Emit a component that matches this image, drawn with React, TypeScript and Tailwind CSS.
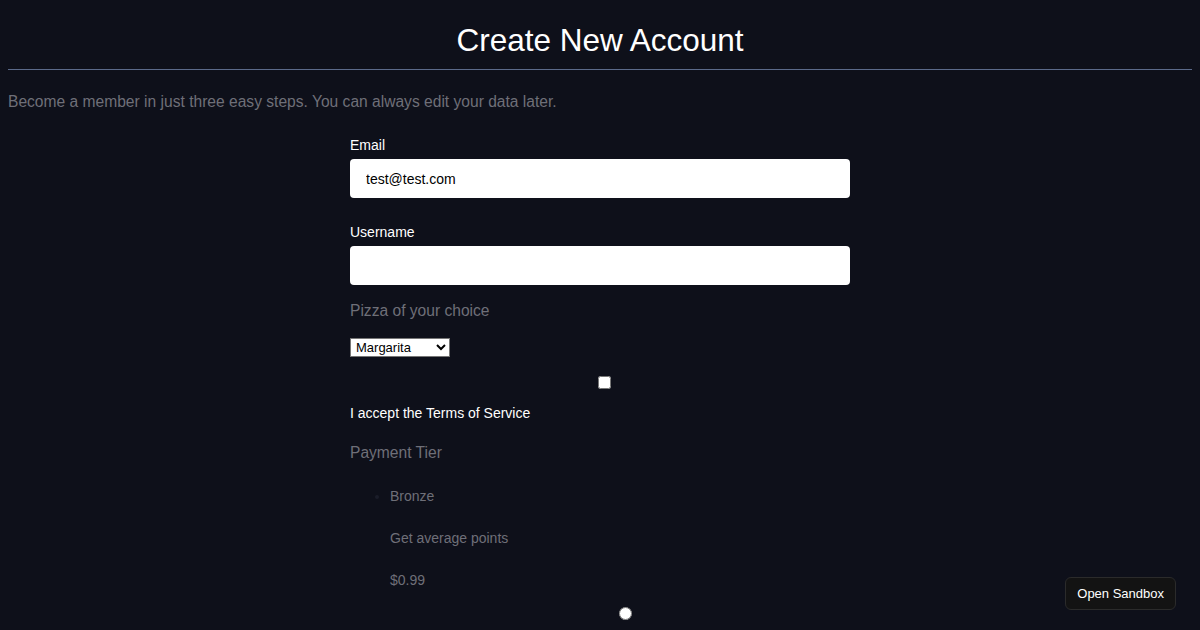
export default function App() {
  return (
    <div className="min-h-screen bg-[#0e101a] font-['Liberation_Sans',Arial,sans-serif] text-white">
      {/* Header */}
      <h1 className="pt-[20px] text-center text-[31.5px] leading-[40px] font-normal">Create New Account</h1>
      <hr className="mx-2 mt-[9px] border-0 border-t border-[#5b6a8a]" />
      <p className="mx-2 mt-[23px] text-[15.6px] leading-[18px] text-[#6e6f78]">
        Become a member in just three easy steps. You can always edit your data later.
      </p>

      {/* Form */}
      <form className="mx-auto w-[500px]">
        <label className="mt-[26px] block text-[14px] leading-[16px]">Email</label>
        <input
          type="email"
          defaultValue="test@test.com"
          className="mt-[6px] block h-[39px] w-full rounded-[4px] bg-white px-4 text-[14px] text-black outline-none"
        />

        <label className="mt-[26px] block text-[14px] leading-[16px]">Username</label>
        <input type="text" className="mt-[6px] block h-[39px] w-full rounded-[4px] bg-white px-4 text-[14px] text-black outline-none" />

        <p className="mt-[17px] text-[15.6px] leading-[18px] text-[#6e6f78]">Pizza of your choice</p>
        <select className="mt-[18px] block h-[19px] w-[100px] border border-[#767676] bg-white pl-[1px] text-[13px] leading-[15px] text-black">
          <option>Margarita</option>
          <option>Pepperoni</option>
          <option>Hawaii</option>
        </select>

        <div className="mt-[19px] flex justify-center">
          <input type="checkbox" className="ml-[8px] h-[13px] w-[13px]" />
        </div>
        <p className="mt-[16px] text-[14px] leading-[16px]">I accept the Terms of Service</p>

        <p className="mt-[23px] text-[15.6px] leading-[18px] text-[#6e6f78]">Payment Tier</p>
        <ul className="mt-[26px] list-disc pl-[40px] text-[14px] leading-[16px] text-[#6e6f78] marker:text-[#1a1d29]">
          <li>
            <p>Bronze</p>
            <p className="mt-[26px]">Get average points</p>
            <p className="mt-[26px]">$0.99</p>
            <div className="mt-[19px] flex justify-center">
              <input type="radio" name="tier" className="ml-[10px] h-[13px] w-[13px]" />
            </div>
          </li>
        </ul>
      </form>

      {/* Floating button */}
      <button className="fixed right-[24px] bottom-[20px] h-[33px] rounded-[6px] border border-[#2b2b2b] bg-[#131313] px-[11px] text-[13px] text-white">
        Open Sandbox
      </button>
    </div>
  );
}
